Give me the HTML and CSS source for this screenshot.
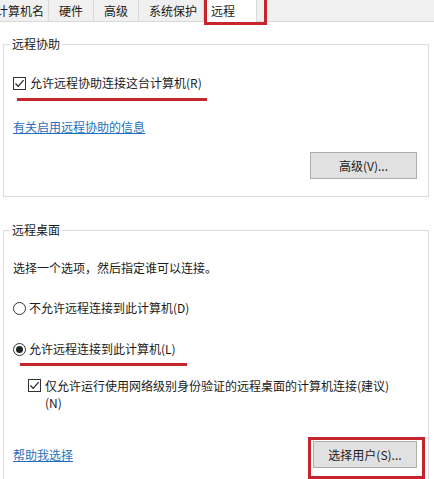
FILE: index.html
```html
<!DOCTYPE html>
<html lang="zh-CN">

<head>
  <meta charset="UTF-8" />
  <meta name="viewport" content="width=device-width, initial-scale=1.0" />
  <title>系统属性 - 远程</title>
  <link rel="stylesheet" href="styles.css">
</head>

<body>
  <!-- Tab strip -->
  <div class="tabs">
    <div class="tab first">计算机名</div>
    <div class="tab">硬件</div>
    <div class="tab">高级</div>
    <div class="tab">系统保护</div>
    <div class="tab active marked">远程</div>
  </div>

  <!-- Remote assistance -->
  <fieldset class="group assist">
    <legend>远程协助</legend>
    <label class="option">
      <span class="check">
        <svg width="11" height="11" viewBox="0 0 11 11"><path d="M1.5 5.5 L4.2 8.3 L9.6 2.2" fill="none" stroke="#222" stroke-width="1.2" /></svg>
      </span>
      允许远程协助连接这台计算机(R)
    </label>
    <div class="red-line line-assist"></div>
    <div class="link-row"><a class="link" href="#">有关启用远程协助的信息</a></div>
    <div class="actions">
      <button class="btn btn-advanced">高级(V)...</button>
    </div>
  </fieldset>

  <!-- Remote desktop -->
  <fieldset class="group desktop">
    <legend>远程桌面</legend>
    <p class="hint">选择一个选项，然后指定谁可以连接。</p>
    <label class="option radio-deny">
      <span class="radio"></span>
      不允许远程连接到此计算机(D)
    </label>
    <label class="option radio-allow">
      <span class="radio selected"></span>
      允许远程连接到此计算机(L)
    </label>
    <div class="red-line line-desktop"></div>
    <label class="option nla">
      <span class="check">
        <svg width="11" height="11" viewBox="0 0 11 11"><path d="M1.5 5.5 L4.2 8.3 L9.6 2.2" fill="none" stroke="#222" stroke-width="1.2" /></svg>
      </span>
      <span class="nla-text">仅允许运行使用网络级别身份验证的远程桌面的计算机连接(建议)<br>(N)</span>
    </label>
    <div class="bottom-row">
      <a class="link" href="#">帮助我选择</a>
      <button class="btn btn-users marked">选择用户(S)...</button>
    </div>
  </fieldset>
</body>

</html>
```

FILE: styles.css
```css
/* General Styles */
body {
  margin: 0;
  padding: 0;
  width: 434px;
  height: 479px;
  overflow: hidden;
  background: #fff;
  color: #1a1a1a;
  font-family: "Noto Sans CJK SC", "Liberation Sans", sans-serif;
  font-size: 12px;
  line-height: 16px;
}

/* Tab strip */
.tabs {
  display: flex;
  height: 21px;
  background: #f0f0f0;
  border-bottom: 1px solid #d9d9d9;
}

.tab {
  padding: 0 10px;
  line-height: 21px;
  border-right: 1px solid #d9d9d9;
  white-space: nowrap;
}

.tab.first {
  margin-left: -4px;
  padding-left: 0;
  padding-right: 4px;
}

.tab.active {
  position: relative;
  margin-left: -5px;
  height: 22px;
  padding: 0 21px 0 7px;
  background: #fff;
  border: 1px solid #d9d9d9;
  border-top: none;
  border-bottom: none;
}

/* Red annotation boxes */
.marked {
  position: relative;
}

.tab.marked::after {
  content: "";
  position: absolute;
  top: -3px;
  left: 0;
  right: -11px;
  bottom: -3px;
  border: 3px solid #c6252d;
}

.btn.marked::after {
  content: "";
  position: absolute;
  top: -5px;
  left: -6px;
  right: -9px;
  bottom: -12px;
  border: 3px solid #c6252d;
}

.red-line {
  height: 3px;
  background: #c6252d;
}

/* Group boxes */
.group {
  margin: 0 5px 0 3px;
  padding: 0 11px 17px 9px;
  border: 1px solid #dcdcdc;
}

.group legend {
  margin-left: -3px;
  padding: 0 2px;
  line-height: 16px;
}

.assist {
  margin-top: 14px;
}

.desktop {
  margin-top: 25px;
  padding-bottom: 11px;
}

/* Options */
.option {
  display: flex;
  align-items: center;
  white-space: nowrap;
}

.check {
  display: inline-flex;
  align-items: center;
  justify-content: center;
  width: 11px;
  height: 11px;
  margin-right: 4px;
  border: 1px solid #333;
  background: #fff;
}

.radio {
  display: inline-flex;
  align-items: center;
  justify-content: center;
  box-sizing: border-box;
  width: 13px;
  height: 13px;
  margin-right: 3px;
  border: 1px solid #333;
  border-radius: 50%;
}

.radio.selected::before {
  content: "";
  width: 7px;
  height: 7px;
  border-radius: 50%;
  background: #222;
}

.assist .option {
  margin-top: 23px;
}

.line-assist {
  width: 190px;
  margin: 7px 0 0 4px;
}

.link-row {
  margin-top: 18px;
}

.link {
  color: #1f6fc0;
  text-decoration: underline;
}

.actions {
  display: flex;
  justify-content: flex-end;
  margin-top: 17px;
}

.btn {
  height: 27px;
  padding: 0;
  font-family: inherit;
  font-size: 12px;
  color: #1a1a1a;
  background: #e1e1e1;
  border: 1px solid #adadad;
}

.btn-advanced {
  width: 107px;
}

.btn-users {
  width: 104px;
}

/* Remote desktop */
.hint {
  margin: 22px 0 0;
}

.radio-deny {
  margin-top: 24px;
}

.radio-allow {
  margin-top: 25px;
}

.line-desktop {
  width: 167px;
  margin: 6px 0 0 7px;
}

.nla {
  align-items: flex-start;
  margin: 11px 0 0 15px;
  line-height: 17px;
}

.nla .check {
  margin-top: 2px;
}

.bottom-row {
  display: flex;
  justify-content: space-between;
  align-items: center;
  margin-top: 30px;
}
```
